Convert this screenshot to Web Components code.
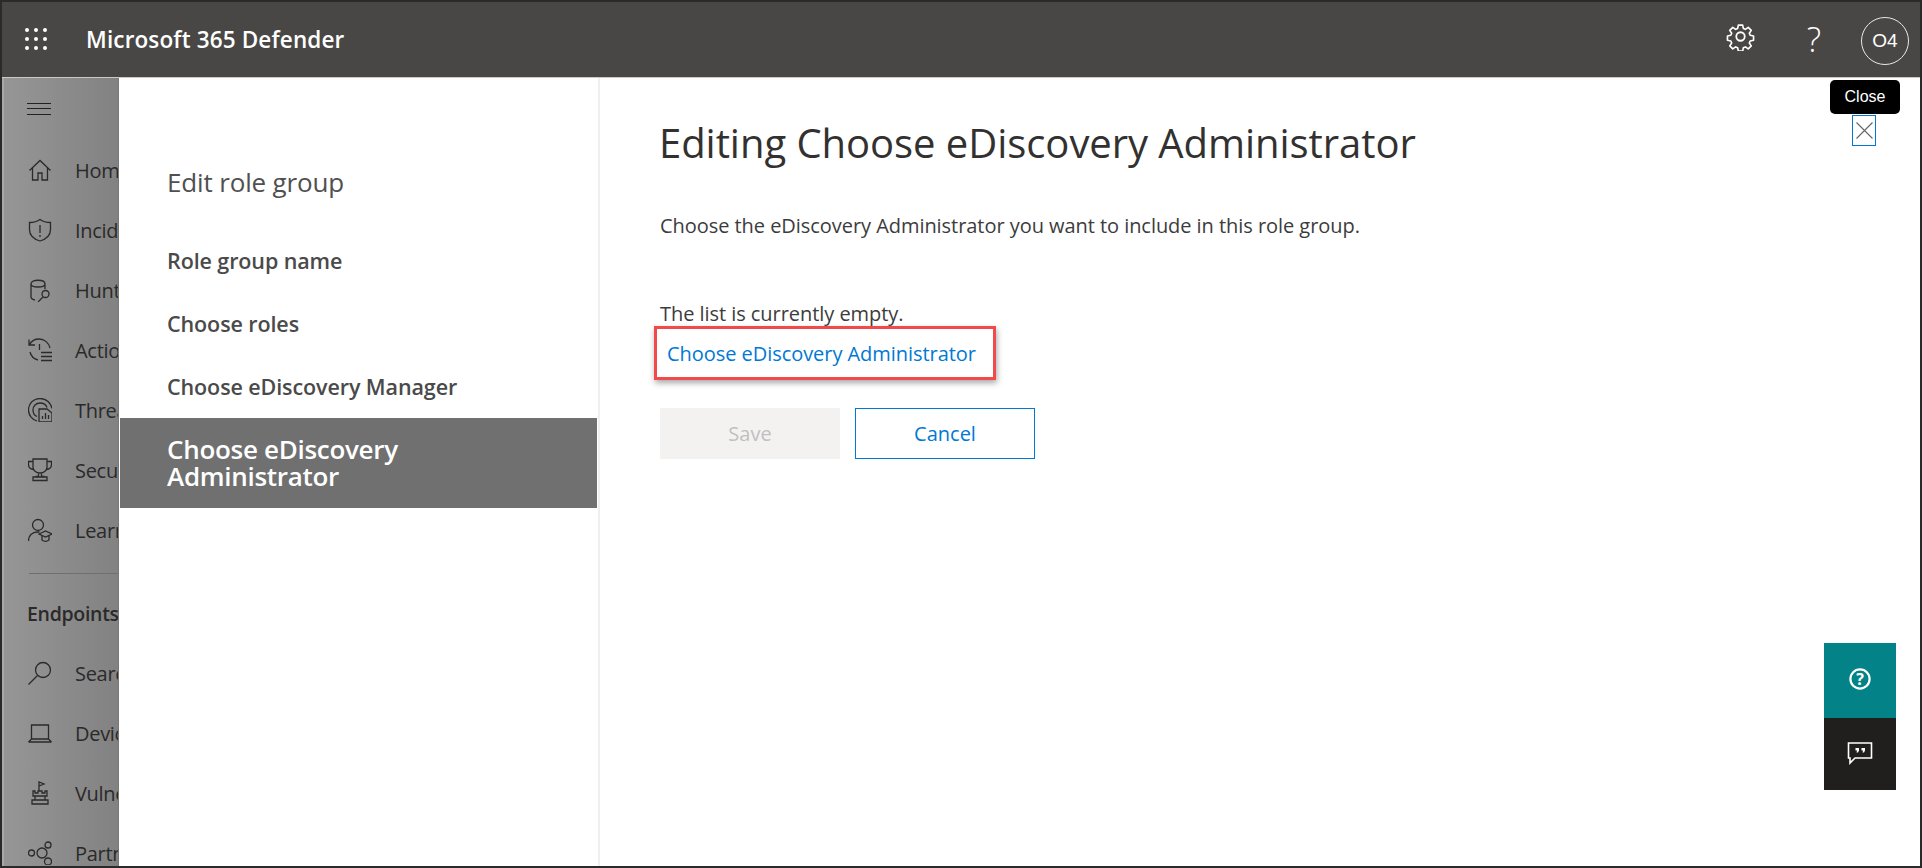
<!DOCTYPE html>
<html lang="en">
<head>
<meta charset="utf-8">
<title>Microsoft 365 Defender</title>
<style>
html,body{margin:0;height:100%;background:#fff;}
body{font-family:"Open Sans","Noto Sans",sans-serif;overflow:hidden;}
</style>
</head>
<body>
<app-shell>
	<top-bar slot="top" title="Microsoft 365 Defender" initials="O4"></top-bar>
	<side-nav slot="side">
		<nav-item label="Home"><svg viewBox="0 0 24 24"><path d="M1.500 12.500 12 2.500l10.500 10M4.500 10v12h5.500v-7h4v7h5.500V10"/></svg></nav-item>
		<nav-item label="Incidents"><svg viewBox="0 0 24 24"><path d="M12 1.500c3 2.300 6.500 3 10.500 3v7c0 5.500-4 9.500-10.500 11.500C5.500 21 1.500 17 1.500 11.500v-7c4 0 7.500-.7 10.500-3zM12 7v8M12 17v2"/></svg></nav-item>
		<nav-item label="Hunting"><svg viewBox="0 0 24 24"><path d="M3 6v13c0 1.500 2 2.500 4 3M3 6c0-5 14-5 14 0 0 1.500-2 3-7 3S3 7.500 3 6zM17 6v5"/><circle cx="17.500" cy="16" r="3.500"/><path d="m15 19-5 5"/></svg></nav-item>
		<nav-item label="Actions &amp; submissions"><svg viewBox="0 0 24 24"><path d="M1.500 6.500c2-3.500 5.500-5.500 9.500-5.500 5.500 0 10 4 11 9M1 1.500v5.500h6M2 14c1 4 4 7 8 8M11.500 6v6M13 14.500h11M13 18.500h11M13 22.500h11"/></svg></nav-item>
		<nav-item label="Threat analytics"><svg viewBox="0 0 24 24"><path d="M9 23C4 21.500.500 17 .500 12 .500 5.500 5.500.500 12 .500s11 4.500 12 10M9 18.500C6.500 17.500 5 15 5 12c0-4 3-7 7-7 3 0 6 1.500 7 4.500"/><path d="M11 11h8l5 4v9H11zM14.500 21v-3M17.500 21v-6M20.500 21v-4"/></svg></nav-item>
		<nav-item label="Secure score"><svg viewBox="0 0 24 24"><path d="M5 1h14v8c0 3.500-3 6-7 6s-7-2.500-7-6zM5 3.500H.500v3c0 2.500 2 4.500 5 5M19 3.500h4.500v3c0 2.500-2 4.500-5 5M10.500 15v3.500H7.500M13.500 15v3.500h3M5 19h14v3.500H5z"/></svg></nav-item>
		<nav-item label="Learning hub"><svg viewBox="0 0 24 24"><circle cx="10" cy="7" r="5.500"/><path d="M.500 23c0-5.500 3.500-9 9-9h2M11 16l6.500-3 6.500 3-6.500 3zM14 18v4c2 1.500 5 1.500 7 0v-4"/></svg></nav-item>
		<hr-line></hr-line>
		<nav-head label="Endpoints"></nav-head>
		<nav-item label="Search"><svg viewBox="0 0 24 24"><circle cx="15" cy="9" r="7.500"/><path d="M9.500 14.500.500 23.500"/></svg></nav-item>
		<nav-item label="Device inventory"><svg viewBox="0 0 24 24"><path d="M3.500 4h17v14h-17zM.500 21h23M.500 21l3-3M23.500 21l-3-3"/></svg></nav-item>
		<nav-item label="Vulnerability management"><svg viewBox="0 0 24 24"><path d="M5 10h2v2h3v-2h4v2h3v-2h2v5H5zM7 15v4h10v-4M4 19h16v4H4zM11 10V1l5 2-5 2"/></svg></nav-item>
		<nav-item label="Partners"><svg viewBox="0 0 24 24"><circle cx="3.500" cy="12" r="3"/><circle cx="14" cy="12" r="5"/><circle cx="20" cy="4" r="3"/><circle cx="20" cy="20.500" r="3.500"/></svg></nav-item>
	</side-nav>
	<edit-panel slot="main">
		<wizard-steps slot="steps" heading="Edit role group">
			<wizard-step>Role group name</wizard-step>
			<wizard-step>Choose roles</wizard-step>
			<wizard-step>Choose eDiscovery Manager</wizard-step>
			<wizard-step active>Choose eDiscovery Administrator</wizard-step>
		</wizard-steps>
		<wizard-page slot="page" heading="Editing Choose eDiscovery Administrator"
			description="Choose the eDiscovery Administrator you want to include in this role group."
			empty="The list is currently empty." link="Choose eDiscovery Administrator"></wizard-page>
	</edit-panel>
	<close-tip slot="over"></close-tip>
	<float-actions slot="over"></float-actions>
</app-shell>

<script>
const FONT = `"Open Sans","Noto Sans",sans-serif`;

class AppShell extends HTMLElement{
	constructor(){
		super();
		this.attachShadow({mode:"open"}).innerHTML = `
		<style>
			:host{display:flex;flex-direction:column;position:relative;box-sizing:border-box;width:1922px;height:868px;border:2px solid #2a2a2a;overflow:hidden;}
			.row{flex:1;display:flex;min-height:0;}
		</style>
		<slot name="top"></slot>
		<div class="row"><slot name="side"></slot><slot name="main"></slot></div>
		<slot name="over"></slot>`;
	}
}

class TopBar extends HTMLElement{
	constructor(){
		super();
		this.attachShadow({mode:"open"});
	}
	connectedCallback(){
		const title = this.getAttribute("title") || "";
		const initials = this.getAttribute("initials") || "";
		this.shadowRoot.innerHTML = `
		<style>
			:host{display:flex;align-items:center;box-sizing:border-box;height:76px;flex:none;background:#494745;border-bottom:1px solid #c9c9c9;color:#fff;padding:0 11px 0 23px;}
			.waffle{width:22px;height:22px;flex:none;margin-bottom:1px;}
			h1{margin:0 0 0 39px;font:600 22.500px ${FONT};letter-spacing:.15px;flex:1;}
			.gear{width:29px;height:29px;margin:0 47px 6px 0;}
			.help{font:300 34px "Open Sans",sans-serif;width:24px;text-align:center;margin:0 35px 2px 0;}
			.me{box-sizing:border-box;width:48px;height:48px;border:1px solid #e8e8e8;border-radius:50%;display:flex;align-items:center;justify-content:center;font:19px "Liberation Sans",sans-serif;margin-top:3px;}
		</style>
		<svg class="waffle" viewBox="0 0 22 22" fill="#fff">
			<circle cx="2" cy="2" r="2"/><circle cx="11" cy="2" r="2"/><circle cx="20" cy="2" r="2"/>
			<circle cx="2" cy="11" r="2"/><circle cx="11" cy="11" r="2"/><circle cx="20" cy="11" r="2"/>
			<circle cx="2" cy="20" r="2"/><circle cx="11" cy="20" r="2"/><circle cx="20" cy="20" r="2"/>
		</svg>
		<h1>${title}</h1>
		<svg class="gear" viewBox="0 0 24 24" fill="none" stroke="#fff" stroke-width="1.500" stroke-linejoin="round">
			<circle cx="12" cy="12" r="3.500"/>
			<path d="M10 1.500h4l.6 3.100 1.900.8 2.600-1.800 2.800 2.800-1.800 2.600.8 1.900 3.100.6v4l-3.100.6-.8 1.900 1.800 2.600-2.800 2.800-2.600-1.800-1.900.8-.6 3.100h-4l-.6-3.100-1.900-.8-2.600 1.800-2.800-2.800 1.800-2.600-.8-1.900-3.100-.6v-4l3.100-.6.800-1.900-1.800-2.600 2.800-2.800 2.600 1.800 1.900-.8z" transform="translate(1.200 1.200) scale(.9)"/>
		</svg>
		<span class="help">?</span>
		<div class="me">${initials}</div>`;
	}
}

class SideNav extends HTMLElement{
	constructor(){
		super();
		this.attachShadow({mode:"open"}).innerHTML = `
		<style>
			:host{display:block;box-sizing:border-box;width:117px;flex:none;overflow:hidden;padding-top:15px;background:linear-gradient(90deg,#969696,#828282);border-left:2px solid #a8a8a8;border-right:1px solid #777;white-space:nowrap;color:#2a2a2a;}
			.burger{display:block;width:24px;height:12px;margin:10px 0 25px 23px;border-top:1px solid #222;border-bottom:1px solid #222;position:relative;box-sizing:border-box;}
			.burger i{display:block;height:1px;background:#222;margin-top:4px;}
		</style>
		<span class="burger"><i></i></span>
		<slot></slot>`;
	}
}

class NavItem extends HTMLElement{
	constructor(){
		super();
		this.attachShadow({mode:"open"});
	}
	connectedCallback(){
		this.shadowRoot.innerHTML = `
		<style>
			:host{display:flex;align-items:center;height:60px;padding-left:24px;font:20px ${FONT};letter-spacing:-.3px;}
			::slotted(svg){width:24px;height:24px;flex:none;margin-right:23px;fill:none;stroke:#2a2a2a;stroke-width:1.300;}
		</style>
		<slot></slot><span>${this.getAttribute("label")}</span>`;
	}
}

class NavHead extends HTMLElement{
	constructor(){
		super();
		this.attachShadow({mode:"open"});
	}
	connectedCallback(){
		this.shadowRoot.innerHTML = `
		<style>:host{display:flex;align-items:center;height:38px;padding:0 0 0 23px;margin-bottom:11px;font:600 19.500px ${FONT};letter-spacing:-.3px;}</style>
		<span>${this.getAttribute("label")}</span>`;
	}
}

class HrLine extends HTMLElement{
	constructor(){
		super();
		this.attachShadow({mode:"open"}).innerHTML = `<style>:host{display:block;height:1px;margin:13px 0 20px 25px;background:#6f6f6f;}</style>`;
	}
}

class EditPanel extends HTMLElement{
	constructor(){
		super();
		this.attachShadow({mode:"open"}).innerHTML = `
		<style>
			:host{display:flex;flex:1;min-width:0;background:#fff;}
		</style>
		<slot name="steps"></slot><slot name="page"></slot>`;
	}
}

class WizardSteps extends HTMLElement{
	constructor(){
		super();
		this.attachShadow({mode:"open"});
	}
	connectedCallback(){
		this.shadowRoot.innerHTML = `
		<style>
			:host{display:block;box-sizing:border-box;width:481px;flex:none;border-right:2px solid #efefef;padding:0 1px;}
			h2{margin:0;padding:88px 0 0 47px;height:152px;box-sizing:border-box;font:400 26px/1.300 ${FONT};color:#505050;letter-spacing:-.15px;}
		</style>
		<h2>${this.getAttribute("heading")}</h2>
		<slot></slot>`;
	}
}

class WizardStep extends HTMLElement{
	constructor(){
		super();
		this.attachShadow({mode:"open"}).innerHTML = `
		<style>
			:host{display:block;box-sizing:border-box;padding:17px 60px 18px 47px;min-height:63px;font:600 21.500px/28px ${FONT};letter-spacing:-.1px;color:#4a4a4a;}
			:host([active]){background:#707070;color:#fff;font-size:26px;letter-spacing:-.3px;line-height:27px;padding:18px 60px 18px 47px;min-height:90px;margin-top:-1px;}
		</style>
		<slot></slot>`;
	}
}

class WizardPage extends HTMLElement{
	constructor(){
		super();
		this.attachShadow({mode:"open"});
	}
	connectedCallback(){
		const a = n => this.getAttribute(n);
		this.shadowRoot.innerHTML = `
		<style>
			:host{display:block;flex:1;padding:39px 0 0 60px;color:#3c3c3c;font-family:${FONT};}
			h2{margin:0 0 0 -1px;font:400 40px/52px ${FONT};letter-spacing:-.05px;color:#323130;}
			p{margin:0;font-size:20px;letter-spacing:-.05px;line-height:26px;}
			.desc{margin-top:44px;}
			.empty{margin-top:62px;}
			.link{display:block;box-sizing:border-box;width:342px;height:54px;margin:-1px 0 0 -6px;padding:0 0 0 10px;line-height:49px;border:3px solid #f24a4a;box-shadow:1px 3px 6px rgba(0,0,0,.35);color:#0078d4;font-size:20px;letter-spacing:-.05px;white-space:nowrap;}
			.btns{display:flex;gap:15px;margin-top:28px;}
		</style>
		<h2>${a("heading")}</h2>
		<p class="desc">${a("description")}</p>
		<p class="empty">${a("empty")}</p>
		<a class="link">${a("link")}</a>
		<div class="btns"><ui-button disabled>Save</ui-button><ui-button>Cancel</ui-button></div>`;
	}
}

class UiButton extends HTMLElement{
	constructor(){
		super();
		this.attachShadow({mode:"open"}).innerHTML = `
		<style>
			:host{display:flex;align-items:center;justify-content:center;box-sizing:border-box;width:180px;height:51px;border:1px solid #0078d4;color:#0078d4;font:20px ${FONT};}
			:host([disabled]){background:#f3f2f1;border-color:#f3f2f1;color:#c0c0c0;}
		</style>
		<slot></slot>`;
	}
}

class CloseTip extends HTMLElement{
	constructor(){
		super();
		this.attachShadow({mode:"open"}).innerHTML = `
		<style>
			:host{position:absolute;top:78px;left:1828px;display:flex;flex-direction:column;align-items:center;width:70px;}
			.tip{box-sizing:border-box;width:70px;height:34px;border-radius:5px;background:#000;color:#fff;font:16px/34px "Liberation Sans",sans-serif;text-align:center;}
			.x{box-sizing:border-box;width:24px;height:31px;margin:1px 0 0 -2px;border:1px solid #0078d4;display:flex;align-items:center;justify-content:center;}
			svg{width:17px;height:17px;stroke:#666;stroke-width:1.100;fill:none;}
		</style>
		<div class="tip">Close</div>
		<div class="x"><svg viewBox="0 0 17 17"><path d="M.500.500l16 16M16.500.500l-16 16"/></svg></div>`;
	}
}

class FloatActions extends HTMLElement{
	constructor(){
		super();
		this.attachShadow({mode:"open"}).innerHTML = `
		<style>
			:host{position:absolute;top:641px;left:1822px;width:72px;display:flex;flex-direction:column;}
			div{display:flex;align-items:center;justify-content:center;}
			.help{height:75px;background:#038387;}
			.chat{height:72px;background:#201f1e;}
			svg{width:26px;height:26px;fill:none;stroke:#fff;margin-top:-3px;}
			.q{font:700 16px "Open Sans",sans-serif;fill:#fff;stroke:none;}
		</style>
		<div class="help"><svg viewBox="0 0 26 26"><circle cx="13" cy="13" r="9.600" stroke-width="2.200"/><text class="q" x="13" y="18.800" text-anchor="middle">?</text></svg></div>
		<div class="chat"><svg viewBox="0 0 26 26" stroke-width="1.600"><path d="M1.500 3h23v15H8l-5 5v-5H1.500z"/><path d="M8.500 8h3.500v2.500l-1 2h-1.500l.6-2H8.500zM14.500 8H18v2.500l-1 2h-1.500l.6-2h-1.600z" fill="#fff" stroke="none"/></svg></div>`;
	}
}

customElements.define("app-shell",AppShell);
customElements.define("top-bar",TopBar);
customElements.define("side-nav",SideNav);
customElements.define("nav-item",NavItem);
customElements.define("nav-head",NavHead);
customElements.define("hr-line",HrLine);
customElements.define("edit-panel",EditPanel);
customElements.define("wizard-steps",WizardSteps);
customElements.define("wizard-step",WizardStep);
customElements.define("wizard-page",WizardPage);
customElements.define("ui-button",UiButton);
customElements.define("close-tip",CloseTip);
customElements.define("float-actions",FloatActions);
</script>
</body>
</html>
